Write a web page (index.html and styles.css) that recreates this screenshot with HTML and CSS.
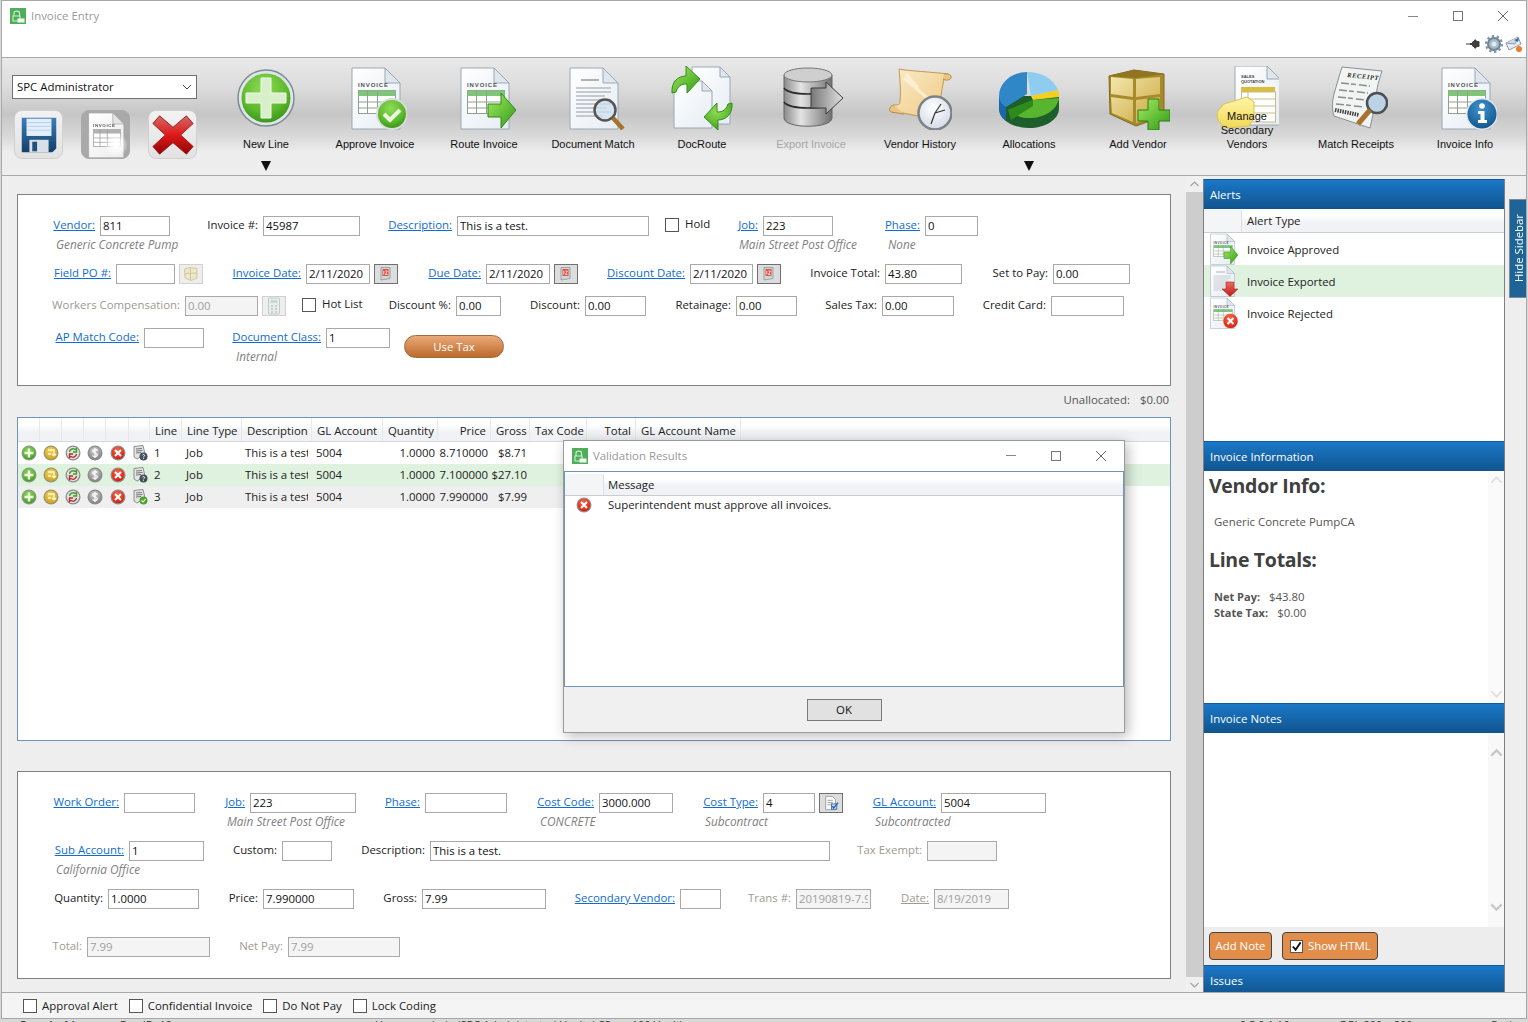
FILE: index.html
```html
<!DOCTYPE html>
<html lang="en">
<head>
<meta charset="utf-8">
<title>Invoice Entry</title>
<link rel="stylesheet" href="styles.css">
</head>
<body>
<svg class="defs" aria-hidden="true">
  <defs>
    <linearGradient id="gDoc" x1="0" y1="0" x2="1" y2="1"><stop offset="0" stop-color="#ffffff"/><stop offset="1" stop-color="#e6edf4"/></linearGradient>
    <radialGradient id="gGreen" cx=".45" cy=".3" r=".8"><stop offset="0" stop-color="#8fdc55"/><stop offset=".6" stop-color="#5cb82c"/><stop offset="1" stop-color="#2f8a12"/></radialGradient>
    <radialGradient id="gRed" cx=".45" cy=".3" r=".8"><stop offset="0" stop-color="#f56a4a"/><stop offset=".7" stop-color="#df2d1a"/><stop offset="1" stop-color="#a81408"/></radialGradient>
    <radialGradient id="gBlue" cx=".45" cy=".3" r=".8"><stop offset="0" stop-color="#3f93cf"/><stop offset="1" stop-color="#0e4f85"/></radialGradient>
    <radialGradient id="gYellow" cx=".45" cy=".3" r=".8"><stop offset="0" stop-color="#f4d75a"/><stop offset="1" stop-color="#c99a10"/></radialGradient>
    <radialGradient id="gSilver" cx=".45" cy=".3" r=".8"><stop offset="0" stop-color="#d4d4d4"/><stop offset="1" stop-color="#777777"/></radialGradient>
    <linearGradient id="gArrow" x1="0" y1="0" x2="1" y2="1"><stop offset="0" stop-color="#a6ec60"/><stop offset="1" stop-color="#2f9a18"/></linearGradient>
    <linearGradient id="gArrowRed" x1="0" y1="0" x2="0" y2="1"><stop offset="0" stop-color="#f06a60"/><stop offset="1" stop-color="#bb1d18"/></linearGradient>
    <linearGradient id="gDb" x1="0" y1="0" x2="1" y2="0"><stop offset="0" stop-color="#8a8a8a"/><stop offset=".35" stop-color="#e4e4e4"/><stop offset="1" stop-color="#6f6f6f"/></linearGradient>
    <linearGradient id="gDbArrow" x1="0" y1="0" x2="1" y2="0"><stop offset="0" stop-color="#777"/><stop offset="1" stop-color="#e0e0e0"/></linearGradient>
    <linearGradient id="gParch" x1="0" y1="0" x2="1" y2="1"><stop offset="0" stop-color="#fbecc8"/><stop offset="1" stop-color="#eec781"/></linearGradient>
    <radialGradient id="gClock" cx=".45" cy=".35" r=".7"><stop offset="0" stop-color="#ffffff"/><stop offset="1" stop-color="#cfd8e4"/></radialGradient>
    <linearGradient id="gGold" x1="0" y1="0" x2="1" y2="1"><stop offset="0" stop-color="#f4e8ae"/><stop offset="1" stop-color="#c9a53c"/></linearGradient>
    <linearGradient id="gFlop" x1="0" y1="0" x2="0" y2="1"><stop offset="0" stop-color="#3d7fb8"/><stop offset="1" stop-color="#123f6a"/></linearGradient>
    <linearGradient id="gX" x1="0" y1="0" x2="0" y2="1"><stop offset="0" stop-color="#cf6a6a"/><stop offset=".5" stop-color="#e01818"/><stop offset="1" stop-color="#8e0606"/></linearGradient>
    <linearGradient id="gTab" x1="0" y1="0" x2="0" y2="1"><stop offset="0" stop-color="#fff6a8"/><stop offset="1" stop-color="#f2d856"/></linearGradient>

    <symbol id="s-doc" viewBox="0 0 64 64"><path d="M9 2H42L57 17V63H9Z" fill="url(#gDoc)" stroke="#9aa8b4"/><path d="M42 2V17H57Z" fill="#dfe6ee" stroke="#9aa8b4"/></symbol>
    <symbol id="s-invoice" viewBox="0 0 64 64">
      <use href="#s-doc"/>
      <text x="15" y="21" class="svg-cap">INVOICE</text>
      <rect x="15.500" y="24.500" width="37" height="23" fill="#fff" stroke="#8fa08f"/>
      <rect x="15.500" y="24.500" width="37" height="5.500" fill="#7fc67b"/>
      <path d="M15.500 36H52.500M15.500 42H52.500M24.500 24.500V47.500M34.500 24.500V47.500" stroke="#8fa08f" fill="none"/>
    </symbol>
    <symbol id="s-check" viewBox="0 0 64 64"><circle cx="49" cy="48" r="16" fill="#d8dedd"/><circle cx="49" cy="48" r="14" fill="url(#gGreen)"/><path d="M41 48l6 6 10-10" fill="none" stroke="#eaf6df" stroke-width="4"/></symbol>
    <symbol id="s-arrow" viewBox="0 0 64 64"><path d="M36 38H49V27L64 44 49 62V51H36Z" fill="url(#gArrow)" stroke="#2f8a18"/></symbol>
    <symbol id="s-info" viewBox="0 0 64 64"><circle cx="49" cy="48" r="16" fill="#dfe6ec"/><circle cx="49" cy="48" r="14.500" fill="url(#gBlue)"/><circle cx="49" cy="40" r="2.800" fill="#fff"/><path d="M45 45H51.500V54H54V57H45V54H47.500V48H45Z" fill="#fff"/></symbol>
    <symbol id="s-redx" viewBox="0 0 64 64"><circle cx="49" cy="48" r="15" fill="url(#gRed)" stroke="#eee"/><path d="M43 42l12 12M55 42L43 54" stroke="#fff" stroke-width="4"/></symbol>
    <symbol id="s-down" viewBox="0 0 64 64"><path d="M40 34H56V48H64L48 63 32 48H40Z" fill="url(#gArrowRed)" stroke="#a31a16"/></symbol>
    <symbol id="s-text" viewBox="0 0 64 64"><use href="#s-doc"/><path d="M15 22H50M15 26H50M15 30H44M15 34H50M15 38H50M15 42H46M15 46H50M15 50H42" stroke="#b4bac0" stroke-width="1.300" fill="none"/><path d="M20 14H38" stroke="#999" stroke-width="1.500"/></symbol>
    <symbol id="s-plus" viewBox="0 0 64 64"><circle cx="32" cy="32" r="28" fill="#dfe6ea" stroke="#7e8b92" stroke-width="1.500"/><circle cx="32" cy="32" r="24.500" fill="url(#gGreen)"/><path d="M27 12H37V27H52V37H37V52H27V37H12V27H27Z" fill="#d9efc9" stroke="#f2fbe9"/></symbol>
    <symbol id="s-docmatch" viewBox="0 0 64 64"><use href="#s-text"/><circle cx="44" cy="44" r="10.500" fill="#cfe0ef" fill-opacity=".75" stroke="#555" stroke-width="2.500"/><path d="M52 52L62 63" stroke="#a9722c" stroke-width="4.500"/></symbol>
    <symbol id="s-route" viewBox="0 0 64 64">
      <path d="M22 1H50L60 11V58H22Z" fill="url(#gDoc)" stroke="#9aa8b4"/><path d="M50 1V11H60Z" fill="#dfe6ee" stroke="#9aa8b4"/>
      <path d="M4 15H32L42 25V62H4Z" fill="url(#gDoc)" stroke="#9aa8b4"/><path d="M32 15V25H42Z" fill="#dfe6ee" stroke="#9aa8b4"/>
      <path d="M2 27C1 16 8 10 16 10V0L30 13 17 27V18C11 18 8 20 6 26Z" fill="url(#gArrow)" stroke="#35901a"/>
      <path d="M62 37C63 48 56 54 48 54V64L34 51 47 37V46C53 46 56 44 58 38Z" fill="url(#gGreen)" stroke="#35901a"/>
    </symbol>
    <symbol id="s-db" viewBox="0 0 64 64">
      <path d="M5 10C5 1 53 1 53 10V52C53 63 5 63 5 52Z" fill="url(#gDb)" stroke="#666"/>
      <ellipse cx="29" cy="9" rx="24" ry="7" fill="#cfcfcf" stroke="#777"/>
      <path d="M5 22C10 30 48 30 53 22M5 36C10 44 48 44 53 36" fill="none" stroke="#2c2c2c" stroke-width="1.500"/>
      <path d="M32 22H47V16L64 32 47 48V42H32Z" fill="url(#gDbArrow)" stroke="#3d3d3d"/>
    </symbol>
    <symbol id="s-scroll" viewBox="0 0 64 64">
      <path d="M11 3C20 5 45 6 60 8 63 11 60 14 56 13 53 25 52 40 50 54L5 45C1 43 2 40 6 39 12 39 12 38 12 35 13 24 12 14 11 3Z" fill="url(#gParch)" stroke="#bf9a55"/>
      <path d="M56 8C60 7 64 9 63 12 62 14 58 15 55 13" fill="#e9c581" stroke="#b58c42"/>
      <path d="M6 39C2 40 0 44 3 46L16 48" fill="#e9c581" stroke="#b58c42"/>
      <path d="M16 12L44 36M18 8L30 22" stroke="#fff6e0" stroke-width="3" fill="none" opacity=".7"/>
      <circle cx="47" cy="47" r="16.500" fill="url(#gClock)" stroke="#7c8288" stroke-width="2.500"/>
      <path d="M47 47L57 44M47 47L43 58M47 47L53 38" stroke="#333" stroke-width="1.200" fill="none"/>
    </symbol>
    <symbol id="s-pie" viewBox="0 0 64 64">
      <path d="M2 30V42C2 54 16 62 32 62 48 62 62 54 62 42V30Z" fill="#1d5f2a"/>
      <path d="M2 30V42C2 48 5 52 9 55V35Z" fill="#1c67a8"/>
      <path d="M2 30C2 16 16 6 30 6V28L9 41C4 38 2 34 2 30Z" fill="#2f87c8"/>
      <path d="M30 6C44 6 56 12 61 24L34 30Z" fill="#8fcdf0"/>
      <path d="M34 30L61 24C62 27 62 30 62 31L36 34Z" fill="#f3cf20"/>
      <path d="M11 44L36 34 62 32C60 44 48 52 32 52 24 52 17 49 11 44Z" fill="#58b52f"/>
      <path d="M11 44L36 34V40L14 54Z" fill="#2f8a1c"/>
    </symbol>
    <symbol id="s-box" viewBox="0 0 64 64">
      <path d="M3 10L28 4 58 8V50L30 60 4 48Z" fill="#a88a2c" stroke="#84691c"/>
      <path d="M5 11L27 13V31L5 28Z M30 13L54 11V28L30 31Z M5 31L27 34V56L6 47Z M30 34L54 31V48L30 57Z" fill="url(#gGold)"/>
      <path d="M3 10L28 4 58 8 30 12Z" fill="#8f7520"/>
      <path d="M42 33H53V44H64V55H53V64H42V55H32V44H42Z" fill="url(#gArrow)" stroke="#2b7a12"/>
    </symbol>
    <symbol id="s-quote" viewBox="0 0 64 64">
      <path d="M20 0H52L65 13V59H20Z" fill="url(#gDoc)" stroke="#9aa8b4"/><path d="M52 0V13H65Z" fill="#dfe6ee" stroke="#9aa8b4"/>
      <text x="26" y="12" class="svg-cap-s">SALES</text><text x="26" y="17" class="svg-cap-s">QUOTATION</text>
      <rect x="26" y="21" width="34" height="5" fill="#d9be3d"/><rect x="26.500" y="26" width="34" height="30" fill="#fff" stroke="#c3bd8a"/>
      <path d="M26 33H60M26 40H60M26 47H60M33 26V56" stroke="#c3bd8a" fill="none"/>
      <path d="M2 46L9 38 32 31 39 36V52L34 60 12 62C5 60 2 54 2 46Z" fill="url(#gTab)" stroke="#d9c350"/>
    </symbol>
    <symbol id="s-receipt" viewBox="0 0 64 64">
      <path d="M18 1L58 5C56 12 52 22 52 34L46 62 10 50C8 44 8 36 10 28 13 18 15 10 18 1Z" fill="#f2f4f4" stroke="#8a8f92"/>
      <text x="23" y="11" class="svg-cap-i" transform="rotate(6 23 11)">RECEIPT</text>
      <path d="M17 17L46 20M15 24L44 27M14 31L42 34M12 38L40 41" stroke="#8c8c8c" stroke-width="1.500" stroke-dasharray="8 2 5 3" fill="none"/>
      <path d="M11 44L35 49" stroke="#444" stroke-width="4" stroke-dasharray="1.500 1"/>
      <circle cx="53" cy="37" r="10" fill="#bcd3e6" stroke="#4a5054" stroke-width="2.500"/>
      <path d="M46 44L34 58" stroke="#a9722c" stroke-width="5"/>
    </symbol>
    <symbol id="s-floppy" viewBox="0 0 48 48">
      <path d="M6 6H42V38L38 42H6Z" fill="url(#gFlop)"/><rect x="11" y="7" width="26" height="18" fill="#e4eefa"/><path d="M12 11H36M12 15H36M12 19H36" stroke="#b8d0ec"/>
      <rect x="14" y="29" width="20" height="13" fill="#d9dfe5"/><rect x="17" y="31" width="5" height="10" fill="#1f4f7e"/>
    </symbol>
    <symbol id="s-bigx" viewBox="0 0 48 48"><path d="M10 4L24 16 38 4 45 12 32 24 45 36 38 44 24 32 10 44 3 36 16 24 3 12Z" fill="url(#gX)" stroke="#9d1f1f"/></symbol>
    <symbol id="s-rplus" viewBox="0 0 16 16"><circle cx="8" cy="8" r="7.500" fill="#8b9a8b"/><circle cx="8" cy="8" r="6.200" fill="url(#gGreen)"/><path d="M8 3.500V12.500M3.500 8H12.500" stroke="#f1fbe8" stroke-width="2.400"/></symbol>
    <symbol id="s-rnext" viewBox="0 0 16 16"><circle cx="8" cy="8" r="7.500" fill="#9a9478"/><circle cx="8" cy="8" r="6.200" fill="url(#gYellow)"/><path d="M5 5H11V11M11 11L9 9M11 11L13 9M5 9H8" stroke="#fff6cf" stroke-width="1.400" fill="none"/></symbol>
    <symbol id="s-rroute" viewBox="0 0 16 16"><circle cx="8" cy="8" r="7.500" fill="#8b8b8b"/><circle cx="8" cy="8" r="6.200" fill="#e2e2e2"/><path d="M4.500 7A3.500 3.500 0 0 1 10 4.500L11.500 3.500V7H8" stroke="#3e9e28" stroke-width="1.400" fill="none"/><path d="M11.500 9A3.500 3.500 0 0 1 6 11.500L4.500 12.500V9H8" stroke="#b4302a" stroke-width="1.400" fill="none"/></symbol>
    <symbol id="s-rdollar" viewBox="0 0 16 16"><circle cx="8" cy="8" r="7.500" fill="#8c8c8c"/><circle cx="8" cy="8" r="6.200" fill="url(#gSilver)"/><path d="M10.500 5.500C9.500 4 5.500 4.200 5.700 6.200 6 8 10.300 7.700 10.400 9.800 10.300 12 6.500 12 5.500 10.500M8 3V13" stroke="#fafafa" stroke-width="1.300" fill="none"/></symbol>
    <symbol id="s-rx" viewBox="0 0 16 16"><circle cx="8" cy="8" r="7.500" fill="#9a8a8a"/><circle cx="8" cy="8" r="6.200" fill="url(#gRed)"/><path d="M5 5L11 11M11 5L5 11" stroke="#fff" stroke-width="2"/></symbol>
    <symbol id="s-rdoc" viewBox="0 0 16 16"><path d="M2 1.500L11 .5 13 9 5 14 2 12Z" fill="#e3e3e3" stroke="#777" stroke-width=".8"/><path d="M4 4L10 3.500M4 6L10.500 5.500M4 8L9 7.500" stroke="#666" stroke-width=".9"/></symbol>
    <symbol id="s-rq" viewBox="0 0 16 16"><use href="#s-rdoc"/><circle cx="11.500" cy="11.500" r="4" fill="#46505a"/><path d="M10.300 10.300C10.800 9 12.800 9.400 12.600 10.700 12.400 11.400 11.500 11.400 11.500 12.400M11.500 13.200V14" stroke="#fff" stroke-width=".9" fill="none"/></symbol>
    <symbol id="s-rok" viewBox="0 0 16 16"><use href="#s-rdoc"/><circle cx="11.500" cy="11.500" r="4" fill="#4ea62e"/><path d="M9.500 11.500L11 13 13.500 10" stroke="#fff" stroke-width="1.100" fill="none"/></symbol>
    <symbol id="s-cal" viewBox="0 0 16 16"><path d="M3 1.500H12V12.500L3 14Z" fill="#cfd6dd" stroke="#8c949c" stroke-width=".8"/><rect x="4.500" y="3" width="6" height="7" fill="#e0503c"/><path d="M5.800 4.800V8.500M7.500 5H9.300L7.500 8.500H9.500" stroke="#fff" stroke-width=".8" fill="none"/></symbol>
    <symbol id="s-minibox" viewBox="0 0 16 16"><path d="M1.500 3L7 1.500 14 2.500V12L8 14.500 2 12Z" fill="#eee8c8" stroke="#cfc8a0"/><path d="M7.500 2V14M1.500 7.500L14 7" stroke="#cfc8a0" fill="none"/></symbol>
    <symbol id="s-calc" viewBox="0 0 16 18"><rect x="2.500" y="1" width="11" height="16" rx="1" fill="#e8eded" stroke="#c4cbcb"/><rect x="4.500" y="3" width="7" height="3" fill="#c9d6d6"/><path d="M5 9H7M9 9H11M5 12H7M9 12H11M5 15H7M9 15H11" stroke="#bcc6c6" stroke-width="1.500"/></symbol>
    <symbol id="s-doccheck" viewBox="0 0 18 18"><path d="M3 1.500H10.500L14 5V16.500H3Z" fill="#fafafa" stroke="#9a9a9a"/><path d="M5 6H11M5 8.500H11M5 11H9" stroke="#9a9a9a"/><rect x="9.500" y="10" width="6" height="6" fill="#cfe0f2" stroke="#2f6db0"/><path d="M10.500 12.500L12 14.500 17 8.500" stroke="#1f5fa8" stroke-width="1.500" fill="none"/></symbol>
    <symbol id="s-app" viewBox="0 0 16 16"><rect width="16" height="16" fill="#4fae5a"/><path d="M4 8V5C4 2.500 9.500 2.500 9.500 5V8M3 8H10V13H3Z" fill="none" stroke="#cfeed2" stroke-width="1.100"/><rect x="7.500" y="10.500" width="7" height="4" fill="#f0f8f0"/></symbol>
    <symbol id="s-gear" viewBox="0 0 18 18"><circle cx="9" cy="9" r="6" fill="#a9bac8" stroke="#6f8597" stroke-width="2"/><circle cx="9" cy="9" r="7.800" fill="none" stroke="#7f93a3" stroke-width="2.400" stroke-dasharray="2.400 2.500"/><circle cx="9" cy="9" r="2.500" fill="#e3eaf0"/></symbol>
    <symbol id="s-mail" viewBox="0 0 18 18"><path d="M1 8L13 2 16 9 4 15Z" fill="#e7edf3" stroke="#8d99a4"/><path d="M1 8L10 9 13 2" fill="#cfdbe6" stroke="#8d99a4"/><path d="M9 5L14 3 13 7" fill="#2f6eb5"/><circle cx="14" cy="14" r="3" fill="#ee7d2c"/></symbol>
    <symbol id="s-pin" viewBox="0 0 14 12"><path d="M0 6H4M4 5.500H6L7 3.500H8.500V8.500H7L6 6.500H4M8.500 2V10H10V8.500H13V3.500H10V2Z" fill="#3f3f3f" stroke="#3f3f3f"/></symbol>
    <symbol id="s-chk" viewBox="0 0 12 12"><path d="M2 6L5 9.500 10.500 1.500" fill="none" stroke="#111" stroke-width="2"/></symbol>
  </defs>
</svg>

<div class="window">
  <header class="titlebar">
    <div class="title-row">
      <svg class="app-icon"><use href="#s-app"/></svg>
      <span class="title-text">Invoice Entry</span>
      <div class="win-ctrls">
        <span class="wc wc-min"></span>
        <span class="wc wc-max"></span>
        <svg class="wc wc-close" viewBox="0 0 10 10"><path d="M0 0L10 10M10 0L0 10" stroke="#666" fill="none"/></svg>
      </div>
    </div>
    <div class="title-tools">
      <svg class="tool-pin"><use href="#s-pin"/></svg>
      <svg class="tool-ic"><use href="#s-gear"/></svg>
      <svg class="tool-ic"><use href="#s-mail"/></svg>
    </div>
  </header>

  <nav class="toolbar">
    <div class="tb-left">
      <div class="combo"><span>SPC Administrator</span><svg class="combo-chev" viewBox="0 0 10 6"><path d="M1 1L5 5 9 1" fill="none" stroke="#444"/></svg></div>
      <div class="tb-btns">
        <button class="tb-sq"><svg class="ic48"><use href="#s-floppy"/></svg></button>
        <button class="tb-sq tb-sq-gray"><svg class="ic46"><use href="#s-invoice"/></svg><span class="spark"></span></button>
        <button class="tb-sq"><svg class="ic48"><use href="#s-bigx"/></svg></button>
      </div>
    </div>
    <div class="tb-items">
      <div class="tb-item"><svg class="ic64"><use href="#s-plus"/></svg><span class="tb-label">New Line</span><span class="tb-drop"></span></div>
      <div class="tb-item"><svg class="ic64"><use href="#s-invoice"/><use href="#s-check"/></svg><span class="tb-label">Approve Invoice</span></div>
      <div class="tb-item"><svg class="ic64"><use href="#s-invoice"/><use href="#s-arrow"/></svg><span class="tb-label">Route Invoice</span></div>
      <div class="tb-item"><svg class="ic64"><use href="#s-docmatch"/></svg><span class="tb-label">Document Match</span></div>
      <div class="tb-item"><svg class="ic64"><use href="#s-route"/></svg><span class="tb-label">DocRoute</span></div>
      <div class="tb-item"><svg class="ic64"><use href="#s-db"/></svg><span class="tb-label tb-off">Export Invoice</span></div>
      <div class="tb-item"><svg class="ic64"><use href="#s-scroll"/></svg><span class="tb-label">Vendor History</span></div>
      <div class="tb-item"><svg class="ic64"><use href="#s-pie"/></svg><span class="tb-label">Allocations</span><span class="tb-drop"></span></div>
      <div class="tb-item"><svg class="ic64"><use href="#s-box"/></svg><span class="tb-label">Add Vendor</span></div>
      <div class="tb-item"><svg class="ic64"><use href="#s-quote"/></svg><span class="tb-label tb-3line">Manage<br>Secondary<br>Vendors</span></div>
      <div class="tb-item"><svg class="ic64"><use href="#s-receipt"/></svg><span class="tb-label">Match Receipts</span></div>
      <div class="tb-item"><svg class="ic64"><use href="#s-invoice"/><use href="#s-info"/></svg><span class="tb-label">Invoice Info</span></div>
    </div>
  </nav>

  <div class="content">
    <main class="main">
      <section class="card card-head">
        <div class="row r1a">
          <a class="lbl">Vendor:</a><input class="inp" value="811">
          <span class="lbl">Invoice #:</span><input class="inp" value="45987">
          <a class="lbl">Description:</a><input class="inp" value="This is a test.">
          <span class="chk-cell"><span class="chk"></span></span><span class="cklbl">Hold</span>
          <a class="lbl">Job:</a><input class="inp" value="223">
          <a class="lbl">Phase:</a><input class="inp" value="0">
        </div>
        <div class="sub s1a"><i>Generic Concrete Pump</i><i>Main Street Post Office</i><i>None</i></div>
        <div class="row r1b">
          <a class="lbl">Field PO #:</a><input class="inp" value="">
          <span class="mini mini-off"><svg class="mini-ic"><use href="#s-minibox"/></svg></span>
          <a class="lbl">Invoice Date:</a><input class="inp" value="2/11/2020">
          <span class="mini"><svg class="mini-ic"><use href="#s-cal"/></svg></span>
          <a class="lbl">Due Date:</a><input class="inp" value="2/11/2020">
          <span class="mini"><svg class="mini-ic"><use href="#s-cal"/></svg></span>
          <a class="lbl">Discount Date:</a><input class="inp" value="2/11/2020">
          <span class="mini"><svg class="mini-ic"><use href="#s-cal"/></svg></span>
          <span class="lbl">Invoice Total:</span><input class="inp" value="43.80">
          <span class="lbl">Set to Pay:</span><input class="inp" value="0.00">
        </div>
        <div class="row r1c">
          <span class="lbl lbl-off">Workers Compensation:</span><input class="inp inp-off" value="0.00" disabled>
          <span class="mini mini-off"><svg class="mini-ic"><use href="#s-calc"/></svg></span>
          <span class="chk-cell"><span class="chk"></span></span><span class="cklbl">Hot List</span>
          <span class="lbl">Discount %:</span><input class="inp" value="0.00">
          <span class="lbl">Discount:</span><input class="inp" value="0.00">
          <span class="lbl">Retainage:</span><input class="inp" value="0.00">
          <span class="lbl">Sales Tax:</span><input class="inp" value="0.00">
          <span class="lbl">Credit Card:</span><input class="inp" value="">
        </div>
        <div class="row r1d">
          <a class="lbl">AP Match Code:</a><input class="inp" value="">
          <a class="lbl">Document Class:</a><input class="inp" value="1">
          <button class="usetax">Use Tax</button>
        </div>
        <div class="sub s1d"><i>Internal</i></div>
      </section>

      <div class="unalloc"><span>Unallocated:</span><span>$0.00</span></div>

      <section class="card card-grid">
        <div class="gr gr-head">
          <span></span><span></span><span></span><span></span><span></span><span></span>
          <span>Line</span><span>Line Type</span><span>Description</span><span>GL Account</span><span>Quantity</span><span class="num">Price</span><span>Gross</span><span>Tax Code</span><span class="num">Total</span><span>GL Account Name</span>
        </div>
        <div class="gr gr-row">
          <svg class="ri"><use href="#s-rplus"/></svg><svg class="ri"><use href="#s-rnext"/></svg><svg class="ri"><use href="#s-rroute"/></svg><svg class="ri"><use href="#s-rdollar"/></svg><svg class="ri"><use href="#s-rx"/></svg><svg class="ri"><use href="#s-rq"/></svg>
          <span>1</span><span>Job</span><span class="clip">This is a test.</span><span>5004</span><span class="num">1.0000</span><span class="num">8.710000</span><span class="num">$8.71</span>
        </div>
        <div class="gr gr-row gr-green">
          <svg class="ri"><use href="#s-rplus"/></svg><svg class="ri"><use href="#s-rnext"/></svg><svg class="ri"><use href="#s-rroute"/></svg><svg class="ri"><use href="#s-rdollar"/></svg><svg class="ri"><use href="#s-rx"/></svg><svg class="ri"><use href="#s-rq"/></svg>
          <span>2</span><span>Job</span><span class="clip">This is a test.</span><span>5004</span><span class="num">1.0000</span><span class="num">7.100000</span><span class="num">$27.10</span>
        </div>
        <div class="gr gr-row gr-gray">
          <svg class="ri"><use href="#s-rplus"/></svg><svg class="ri"><use href="#s-rnext"/></svg><svg class="ri"><use href="#s-rroute"/></svg><svg class="ri"><use href="#s-rdollar"/></svg><svg class="ri"><use href="#s-rx"/></svg><svg class="ri"><use href="#s-rok"/></svg>
          <span>3</span><span>Job</span><span class="clip">This is a test.</span><span>5004</span><span class="num">1.0000</span><span class="num">7.990000</span><span class="num">$7.99</span>
        </div>
      </section>

      <section class="card card-line">
        <div class="row r3a">
          <a class="lbl">Work Order:</a><input class="inp" value="">
          <a class="lbl">Job:</a><input class="inp" value="223">
          <a class="lbl">Phase:</a><input class="inp" value="">
          <a class="lbl">Cost Code:</a><input class="inp" value="3000.000">
          <a class="lbl">Cost Type:</a><input class="inp" value="4">
          <span class="mini"><svg class="mini-ic"><use href="#s-doccheck"/></svg></span>
          <a class="lbl">GL Account:</a><input class="inp" value="5004">
        </div>
        <div class="sub s3a"><i>Main Street Post Office</i><i>CONCRETE</i><i>Subcontract</i><i>Subcontracted</i></div>
        <div class="row r3b">
          <a class="lbl">Sub Account:</a><input class="inp" value="1">
          <span class="lbl">Custom:</span><input class="inp" value="">
          <span class="lbl">Description:</span><input class="inp" value="This is a test.">
          <span class="lbl lbl-off">Tax Exempt:</span><input class="inp inp-off" value="" disabled>
        </div>
        <div class="sub s3b"><i>California Office</i></div>
        <div class="row r3c">
          <span class="lbl">Quantity:</span><input class="inp" value="1.0000">
          <span class="lbl">Price:</span><input class="inp" value="7.990000">
          <span class="lbl">Gross:</span><input class="inp" value="7.99">
          <a class="lbl">Secondary Vendor:</a><input class="inp" value="">
          <span class="lbl lbl-off">Trans #:</span><input class="inp inp-off" value="20190819-7.9" disabled>
          <u class="lbl lbl-off">Date:</u><input class="inp inp-off" value="8/19/2019" disabled>
        </div>
        <div class="row r3d">
          <span class="lbl lbl-off">Total:</span><input class="inp inp-off" value="7.99" disabled>
          <span class="lbl lbl-off">Net Pay:</span><input class="inp inp-off" value="7.99" disabled>
        </div>
      </section>
    </main>

    <div class="vscroll">
      <svg class="vs-btn" viewBox="0 0 10 6"><path d="M1 5L5 1 9 5" fill="none" stroke="#a0a0a0" stroke-width="1.200"/></svg>
      <svg class="vs-btn" viewBox="0 0 10 6"><path d="M1 1L5 5 9 1" fill="none" stroke="#a0a0a0" stroke-width="1.200"/></svg>
    </div>

    <aside class="sidebar">
      <section class="panel panel-alerts">
        <h2 class="ph">Alerts</h2>
        <div class="al-head"><span class="al-gut"></span><span>Alert Type</span></div>
        <div class="al-row"><svg class="al-ic"><use href="#s-invoice"/><use href="#s-arrow"/></svg><span>Invoice Approved</span></div>
        <div class="al-row al-green"><svg class="al-ic"><use href="#s-text"/><use href="#s-down"/></svg><span>Invoice Exported</span></div>
        <div class="al-row"><svg class="al-ic"><use href="#s-invoice"/><use href="#s-redx"/></svg><span>Invoice Rejected</span></div>
      </section>
      <section class="panel panel-info">
        <h2 class="ph">Invoice Information</h2>
        <div class="info-body">
          <div class="info-text">
            <h3 class="info-h">Vendor Info:</h3>
            <p class="info-p">Generic Concrete PumpCA</p>
            <h3 class="info-h info-h2">Line Totals:</h3>
            <p class="info-kv"><b>Net Pay:</b><span>$43.80</span></p>
            <p class="info-kv"><b>State Tax:</b><span>$0.00</span></p>
          </div>
          <div class="ps-bar ps-faint">
            <svg class="ps-ch" viewBox="0 0 10 6"><path d="M1 5L5 1 9 5" fill="none" stroke="#e0e0e0" stroke-width="1.400"/></svg>
            <svg class="ps-ch" viewBox="0 0 10 6"><path d="M1 1L5 5 9 1" fill="none" stroke="#e0e0e0" stroke-width="1.400"/></svg>
          </div>
        </div>
      </section>
      <section class="panel panel-notes">
        <h2 class="ph">Invoice Notes</h2>
        <div class="notes-body">
          <div class="notes-text"></div>
          <div class="ps-bar ps-notes">
            <svg class="ps-ch" viewBox="0 0 10 6"><path d="M1 5L5 1 9 5" fill="none" stroke="#c8c8c8" stroke-width="1.800"/></svg>
            <svg class="ps-ch" viewBox="0 0 10 6"><path d="M1 1L5 5 9 1" fill="none" stroke="#c8c8c8" stroke-width="1.800"/></svg>
          </div>
        </div>
        <div class="notes-btns">
          <button class="orange orange-add">Add Note</button>
          <button class="orange orange-html"><span class="html-chk"><svg class="html-tick"><use href="#s-chk"/></svg></span>Show HTML</button>
        </div>
      </section>
      <h2 class="ph">Issues</h2>
    </aside>

    <div class="hide-col"><div class="hide-tab"><span>Hide Sidebar</span></div></div>
  </div>

  <footer class="checkbar">
    <label class="cb"><span class="chk"></span>Approval Alert</label>
    <label class="cb"><span class="chk"></span>Confidential Invoice</label>
    <label class="cb"><span class="chk"></span>Do Not Pay</label>
    <label class="cb"><span class="chk"></span>Lock Coding</label>
  </footer>

  <div class="modal">
    <div class="modal-title">
      <svg class="app-icon"><use href="#s-app"/></svg>
      <span class="title-text">Validation Results</span>
      <div class="modal-ctrls">
        <span class="wc wc-min"></span>
        <span class="wc wc-max"></span>
        <svg class="wc wc-close" viewBox="0 0 10 10"><path d="M0 0L10 10M10 0L0 10" stroke="#666" fill="none"/></svg>
      </div>
    </div>
    <div class="modal-grid">
      <div class="mg-head"><span class="mg-gut"></span><span>Message</span></div>
      <div class="mg-row"><svg class="mg-ic"><use href="#s-rx"/></svg><span>Superintendent must approve all invoices.</span></div>
    </div>
    <div class="modal-foot"><button class="ok">OK</button></div>
  </div>
</div>

<div class="desk">
  <span class="d1">Page 1 of 1</span><span class="d2">Doc ID: 12</span><span class="d3">User: spcadmin (SPC Administrator) Vault: LCSage 100 Vault)</span><span class="d4">9.5.0.1.16</span><span class="d5">DPI: 200 x 200</span><span class="d6">Options</span>
</div>
</body>
</html>
```

FILE: styles.css
```css
* { box-sizing: border-box; }
html, body { margin: 0; padding: 0; height: 1022px; overflow: hidden; }
body { background: #d8d8d8; font: 11.400px/16px "Open Sans", "Noto Sans", sans-serif; color: #222; }
.defs { position: absolute; width: 0; height: 0; }
h2, h3, p { margin: 0; }
button { font: inherit; cursor: default; padding: 0; }

.svg-cap { font: bold 6px "Liberation Sans", sans-serif; letter-spacing: .9px; fill: #555; }
.svg-cap-s { font: bold 4px "Liberation Sans", sans-serif; fill: #444; }
.svg-cap-i { font: italic bold 6.500px "Liberation Serif", serif; letter-spacing: .6px; fill: #222; }

.window { position: relative; margin-left: 1px; width: 1526px; height: 1019px; background: #eee; border: 1px solid #a8a8a8; display: flex; flex-direction: column; overflow: hidden; }

.titlebar { height: 56px; background: #fff; display: flex; flex-direction: column; flex: none; }
.title-row { display: flex; align-items: center; height: 30px; padding-left: 8px; }
.app-icon { width: 16px; height: 16px; flex: none; margin-right: 5px; }
.title-text { color: #999; }
.win-ctrls { margin-left: auto; display: flex; align-items: center; gap: 35px; padding-right: 18px; }
.wc { display: block; width: 10px; height: 10px; }
.wc-min { height: 1px; background: #888; }
.wc-max { border: 1px solid #777; }
.title-tools { display: flex; align-items: center; justify-content: flex-end; height: 26px; padding: 0 3px 0 0; gap: 2px; }
.tool-pin { width: 14px; height: 12px; margin-right: 3px; }
.tool-ic { width: 18px; height: 18px; }

.toolbar { height: 119px; flex: none; display: flex; border-top: 1px solid #a8a8a8; border-bottom: 1px solid #a8a8a8; background: linear-gradient(#e9e9e9 0%, #dcdcdc 25%, #c6c6c6 48%, #dadada 68%, #ededed 80%, #eee 100%); }
.tb-left { width: 209.500px; flex: none; padding: 17px 0 0 10px; }
.combo { width: 185px; height: 24px; background: #fff; border: 1px solid #707070; display: flex; align-items: center; justify-content: space-between; padding: 0 4px; color: #111; }
.combo-chev { width: 10px; height: 6px; }
.tb-btns { display: flex; gap: 18px; margin: 11px 0 0 2px; }
.tb-sq { position: relative; width: 49px; height: 49px; border: 1px solid #d0d0d0; border-radius: 8px; background: linear-gradient(#f2f2f2, #e2e2e2); display: flex; align-items: center; justify-content: center; }
.tb-sq-gray { background: #a9a9a9; border-color: #aaa; overflow: hidden; }
.ic48 { width: 46px; height: 46px; }
.ic46 { width: 48px; height: 48px; filter: grayscale(1); }
.spark { position: absolute; right: 1px; bottom: 1px; width: 24px; height: 24px; background: radial-gradient(circle, #fff 12%, rgba(255,255,255,.55) 40%, transparent 70%); }
.tb-items { display: flex; }
.tb-item { width: 109px; display: flex; flex-direction: column; align-items: center; padding-top: 8px; position: relative; }
.ic64 { width: 64px; height: 64px; flex: none; overflow: visible; }
.tb-label { font: 11px/14px "Liberation Sans", Arial, sans-serif; color: #111; text-align: center; margin-top: 7px; white-space: nowrap; }
.tb-off { color: #a8a8a8; }
.tb-3line { margin-top: -21px; position: relative; }
.tb-drop { margin-top: 10px; width: 0; height: 0; border-left: 5px solid transparent; border-right: 5px solid transparent; border-top: 10px solid #111; }

.content { flex: 1; min-height: 0; display: flex; }
.main { width: 1184px; flex: none; padding: 18px 15px 0 15px; }
.card { background: #fff; border: 1px solid #808080; width: 1154px; }
.card-head { height: 192px; padding: 21px 0 0 36px; }
.card-grid { height: 324px; border-color: #6f94bb; overflow: hidden; }
.card-line { height: 208px; margin-top: 30px; padding: 21px 0 0 36px; }

.row { display: grid; height: 20px; grid-auto-rows: 20px; align-items: center; }
.r1a { grid-template-columns: 46px 70px 93px 97px 97px 192px 36px 25px 53px 70px 92px 53px; }
.r1b { grid-template-columns: 62px 59px 28px 103px 64px 28px 88px 64px 28px 112px 63px 28px 104px 77px 91px 77px; margin-top: 10px; }
.r1c { grid-template-columns: 131px 73px 28px 36px 40px 94px 45px 84px 61px 90px 61px 85px 72px 97px 73px; margin-top: 12px; }
.r1d { grid-template-columns: 90px 60px 122px 64px 114px; margin-top: 12px; }
.r3a { grid-template-columns: 70px 71px 55px 106px 69px 82px 92px 74px 90px 52px 28px 98px 105px; }
.r3b { grid-template-columns: 75px 75px 78px 50px 98px 400px 97px 70px; margin-top: 10px; }
.r3c { grid-template-columns: 54px 91px 64px 91px 68px 124px 134px 41px 75px 75px 63px 75px; margin-top: 10px; }
.r3d { grid-template-columns: 33px 123px 78px 112px; margin-top: 28px; }

.lbl { justify-self: end; padding-right: 5px; margin-bottom: 2px; white-space: nowrap; color: #222; }
a.lbl { color: #0f6cd0; text-decoration: underline; padding-right: 0; margin-right: 5px; }
.lbl-off { color: #a09a90; }
u.lbl { padding-right: 0; margin-right: 5px; }
.inp { width: 100%; height: 20px; border: 1px solid #a9a9a9; padding: 0 2px 1px; font: 11.400px "Open Sans", "Noto Sans", sans-serif; color: #111; background: #fff; outline: none; display: block; }
.inp-off { background: #f4f4f4; color: #a0a0a0; }
.mini { justify-self: end; width: 24px; height: 20px; border: 1px solid #707070; background: #ddd; display: flex; align-items: center; justify-content: center; }
.mini-off { background: #eee; border-color: #d0d0d0; }
.mini-ic { width: 16px; height: 18px; }
.chk-cell { justify-self: end; padding-right: 6px; margin-bottom: 3px; display: flex; }
.chk { display: block; width: 14px; height: 14px; border: 1px solid #555; background: #fff; flex: none; }
.cklbl { white-space: nowrap; margin-bottom: 4px; }

.sub { display: grid; height: 18px; align-items: center; padding-bottom: 2px; color: #808080; font-size: 11.800px; white-space: nowrap; }
.s1a { grid-template-columns: 683px 149px auto; padding-left: 2px; }
.s1d { margin-left: 182px; }
.s3a { grid-template-columns: 313px 165px 170px auto; margin-left: 173px; }
.s3b { padding-left: 2px; }

.usetax { justify-self: end; align-self: start; margin-top: 7px; width: 100px; height: 23px; border: 1px solid #a06a3a; border-radius: 12px; color: #fff; background: linear-gradient(#eaa978, #bb6a2b); }

.unalloc { height: 31px; width: 1152px; display: flex; justify-content: flex-end; gap: 10px; align-items: center; padding-bottom: 4px; color: #555; }

.gr { display: grid; grid-template-columns: 22px 22px 22px 22px 23px 21px 32px 60px 70px 71px 55px 53px 39px 57px 49px 105px 1fr; align-items: center; }
.gr-head { height: 24px; background: linear-gradient(#fff 30%, #f0f2f5 60%); border-bottom: 1px solid #d8d8d8; }
.gr-head span { height: 23px; line-height: 25px; padding-left: 5px; border-right: 1px solid #e6e8ea; white-space: nowrap; overflow: hidden; }
.gr-head .num { text-align: right; padding-right: 4px; }
.gr-row { height: 22px; }
.gr-row > span { padding-left: 4px; white-space: nowrap; }
.gr-row .clip { overflow: hidden; margin-right: 4px; padding-left: 3px; }
.gr-row .num { text-align: right; padding: 0 3px 0 0; }
.gr-green { background: #dff1df; }
.gr-gray { background: linear-gradient(90deg, #efefef 723px, #fff 723px); }
.ri { width: 16px; height: 16px; justify-self: center; }

.vscroll { width: 17px; flex: none; background: #cdcdcd; display: flex; flex-direction: column; justify-content: space-between; height: 817px; }
.vs-btn { width: 100%; height: 16px; background: #f0f0f0; padding: 5px 3px; display: block; }

.sidebar { width: 302px; flex: none; margin-top: 3px; border: 1px solid #808080; border-width: 0 1px; display: flex; flex-direction: column; overflow: hidden; height: 814px; }
.ph { height: 30px; flex: none; background: linear-gradient(#1b78c8, #10548e); color: #fff; font-size: 11.400px; font-weight: 400; line-height: 30px; padding-left: 6px; border-top: 1px solid #0e5a9a; }
.panel { flex: none; background: #fff; }
.panel-alerts { height: 262px; }
.panel-info { height: 262px; }
.panel-notes { height: 262px; display: flex; flex-direction: column; }
.al-head { height: 24px; display: flex; align-items: center; padding-top: 1px; background: linear-gradient(#fff 30%, #f0f2f5 60%); border-bottom: 1px solid #ccc; }
.al-gut { width: 38px; height: 100%; margin-right: 5px; border-right: 1px solid #dde; background: #f4f5f7; }
.al-row { height: 32px; display: flex; align-items: center; padding-left: 2px; gap: 9px; }
.al-row span { position: relative; top: 1px; }
.al-green { background: #dff1df; }
.al-ic { width: 32px; height: 32px; flex: none; }

.info-body { display: flex; height: 232px; }
.info-text { flex: 1; padding: 0 0 0 5px; }
.info-h { font: 700 19.500px/26px "Open Sans", "Noto Sans", sans-serif; color: #404040; letter-spacing: -.3px; margin-top: 2px; }
.info-h2 { margin-top: 17px; }
.info-p { padding-left: 5px; margin-top: 15px; color: #555; }
.info-kv { padding-left: 5px; display: flex; gap: 9px; color: #555; }
.info-kv b { font-size: 11px; }
.info-h2 + .info-kv { margin-top: 16px; }
.ps-bar { width: 16px; flex: none; display: flex; flex-direction: column; justify-content: space-between; align-items: center; padding: 5px 0; }
.ps-faint { background: #fafafa; }
.ps-notes { background: #f8f8f8; height: 194px; padding: 16px 0; }
.ps-ch { width: 13px; height: 8px; }
.notes-body { display: flex; height: 194px; flex: none; }
.notes-text { flex: 1; }
.notes-btns { flex: 1; background: #ededed; display: flex; gap: 10px; padding: 5px 0 0 5px; }
.orange { height: 28px; background: #e38d4b; border: 1px solid #444; border-radius: 4px; color: #fff; display: flex; align-items: center; }
.orange-add { width: 63px; justify-content: center; }
.orange-html { width: 96px; padding-left: 7px; gap: 5px; }
.html-chk { width: 13px; height: 13px; background: #fff; border: 1px solid #555; display: flex; flex: none; }
.html-tick { width: 11px; height: 11px; }

.hide-col { flex: 1; }
.hide-tab { margin: 23px 0 0 4px; width: 18px; height: 99px; padding-left: 1px; background: #1f6496; border: 1px solid #7a8a98; display: flex; align-items: center; justify-content: center; }
.hide-tab span { writing-mode: vertical-rl; transform: rotate(180deg); color: #fff; white-space: nowrap; }

.checkbar { height: 26px; flex: none; background: #f4f4f4; border-top: 1px solid #a8a8a8; display: flex; align-items: center; padding: 1px 0 0 21px; gap: 11px; }
.cb { display: flex; align-items: center; gap: 5px; color: #222; }

.modal { position: absolute; left: 561px; top: 439px; width: 562px; height: 293px; background: #f0f0f0; border: 1px solid #9a9a9a; box-shadow: 3px 3px 12px rgba(0,0,0,.28); display: flex; flex-direction: column; }
.modal-title { height: 30px; flex: none; background: #fff; display: flex; align-items: center; padding: 0 0 1px 8px; }
.modal-ctrls { margin-left: auto; display: flex; align-items: center; gap: 35px; padding-right: 18px; }
.modal-grid { height: 216px; flex: none; background: #fff; border: 1px solid #6f94bb; }
.mg-head { height: 24px; display: flex; align-items: center; padding-top: 2px; background: linear-gradient(#fff 30%, #f0f2f5 60%); border-bottom: 1px solid #ccc; }
.mg-gut { width: 39px; height: 100%; border-right: 1px solid #dde; margin-right: 4px; background: #f4f5f7; }
.mg-row { display: flex; align-items: center; height: 18px; }
.mg-ic { width: 16px; height: 16px; margin: 0 16px 0 11px; flex: none; }
.modal-foot { flex: 1; display: flex; justify-content: center; align-items: center; padding-top: 1px; }
.ok { width: 75px; height: 22px; border: 1px solid #7a7a7a; background: #e1e1e1; color: #111; }

.desk { height: 3px; overflow: hidden; position: relative; line-height: 14px; font-size: 11px; color: #333; }
.desk span { position: absolute; top: -1px; white-space: nowrap; }
.d1 { left: 20px; } .d2 { left: 120px; } .d3 { left: 375px; } .d4 { left: 1240px; } .d5 { left: 1340px; } .d6 { left: 1490px; }
```
